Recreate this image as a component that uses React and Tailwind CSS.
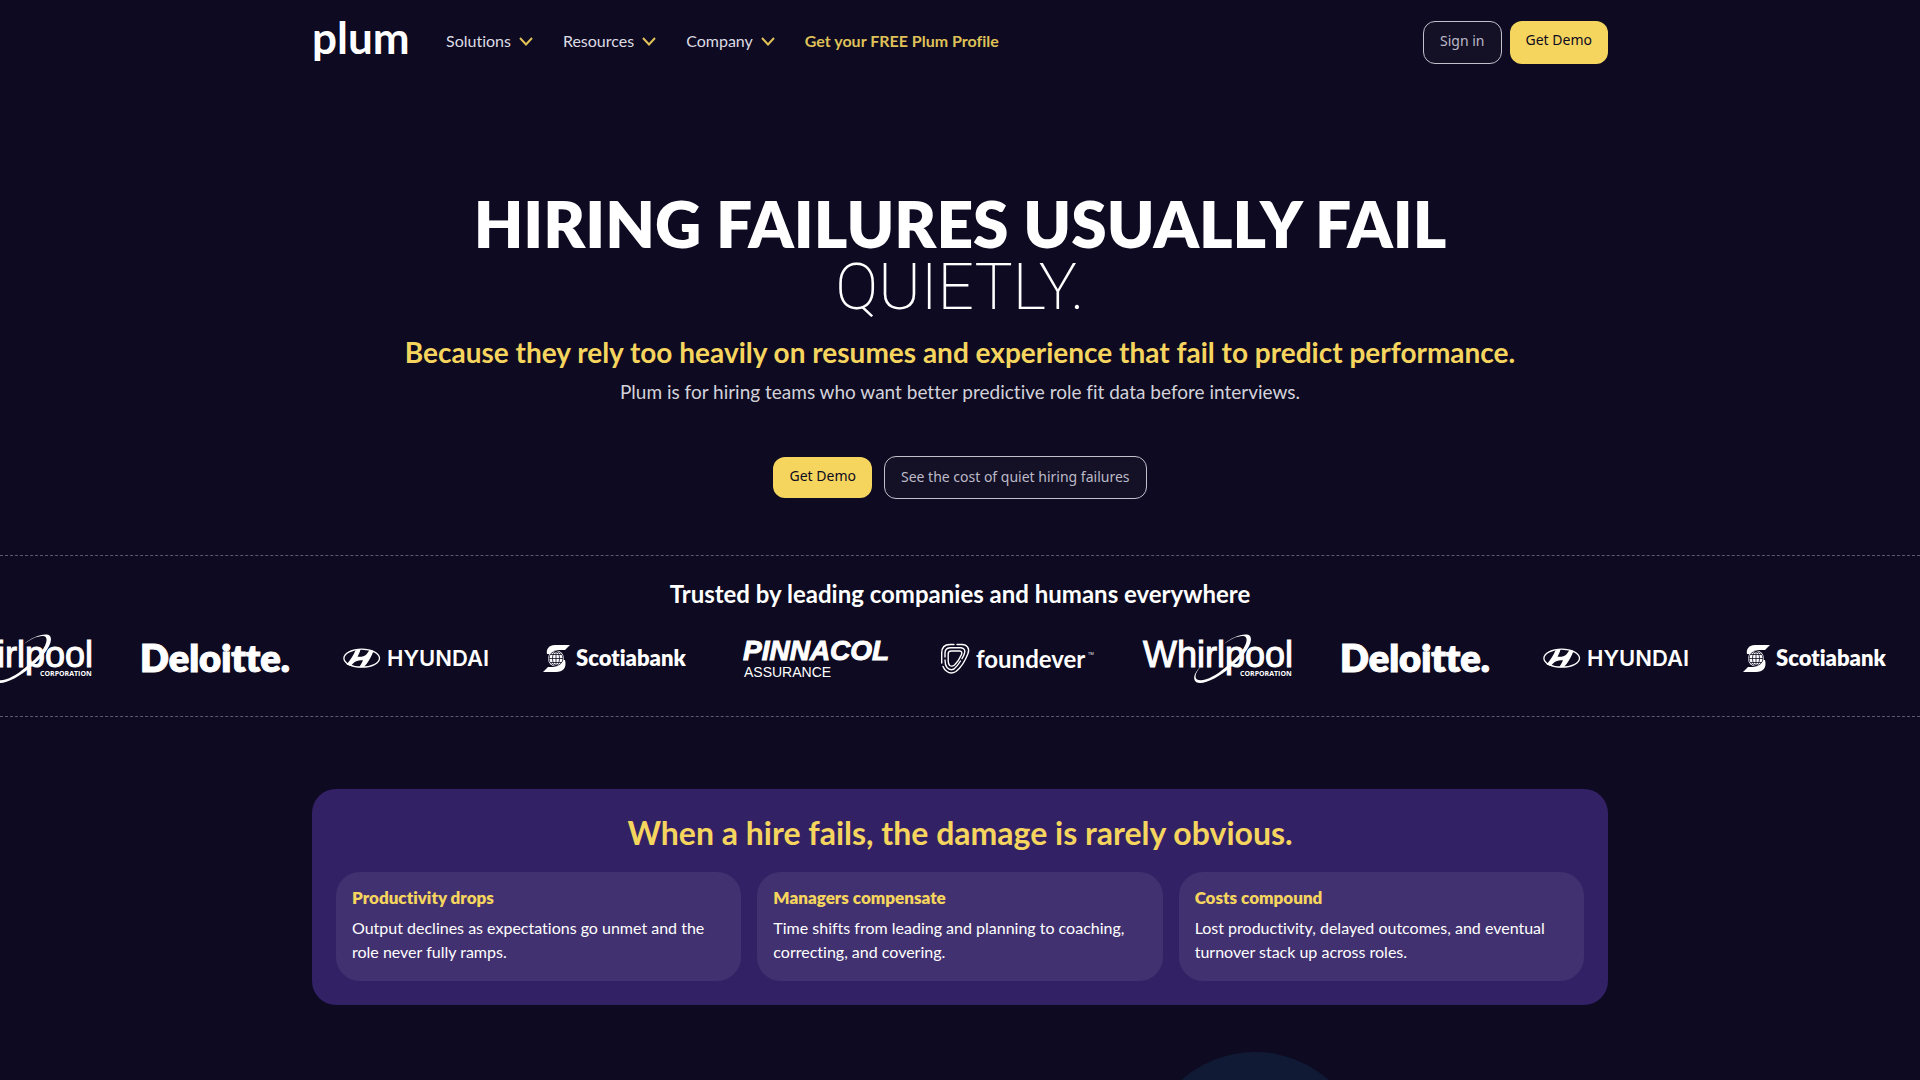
const navItems = ["Solutions", "Resources", "Company"];

const damages = [
  {
    title: "Productivity drops",
    text: "Output declines as expectations go unmet and the role never fully ramps.",
  },
  {
    title: "Managers compensate",
    text: "Time shifts from leading and planning to coaching, correcting, and covering.",
  },
  {
    title: "Costs compound",
    text: "Lost productivity, delayed outcomes, and eventual turnover stack up across roles.",
  },
];

function LogoFrame({ label, children }) {
  return (
    <svg viewBox="0 0 150 60" role="img" aria-label={label} className="h-[60px] w-[150px] shrink-0 overflow-visible fill-white">
      {children}
    </svg>
  );
}

function Whirlpool() {
  return (
    <LogoFrame label="Whirlpool Corporation">
      <text x="1" y="39" className="stroke-white stroke-1 font-['Liberation_Sans'] text-[36px]">Whirlpool</text>
      <text x="98" y="48" className="font-['Open_Sans'] text-[7px] font-bold">CORPORATION</text>
      <path
        fillRule="evenodd"
        d="M82 16C90 9 104 4 108 8c4 6-5 19-19 31C76 50 60 58 54 54c-4-4-1-10 5-16-5 6-7 11-4 13.500 6 3 18-3 29-12.500C98 28 107 15 104 9.500 101 5.500 90 10 82 16z"
      />
    </LogoFrame>
  );
}

function Deloitte() {
  return (
    <LogoFrame label="Deloitte">
      <text x="-2" y="44" className="stroke-white stroke-1 font-['Lato'] text-[38px] font-extrabold">Deloitte.</text>
    </LogoFrame>
  );
}

function Hyundai() {
  return (
    <LogoFrame label="Hyundai">
      <ellipse cx="19.700" cy="30.200" rx="17.800" ry="9" className="fill-none stroke-white stroke-[1.300]" />
      <path d="M13.500 22.300l5-1c-.6 3-1.800 5.400-3 7.500 4 .3 7-.5 9-2.500 1.300-1.300 2.200-3 3-4.500l4 1.300c-2 5.500-5.500 11.500-9.500 16l-5 .2c1.800-2.300 3-4.500 4-7-4-.3-7 .4-9.500 2.700-1 1-1.800 2-2.800 3l-4.200-1.500c4-4.500 7-9.200 9-14.200z" />
      <text x="45" y="38" className="font-['Inter'] text-[22px] font-semibold">HYUNDAI</text>
    </LogoFrame>
  );
}

function Scotiabank() {
  return (
    <LogoFrame label="Scotiabank">
      <path d="M28 17H13C7 17 4 21 5 26h4c1-3 4-4 8-4h6z" />
      <path d="M1 44h13c7 0 11-4 9-12h-4c0 4-3 7-7 7H6z" />
      <circle cx="14" cy="30.500" r="8" />
      <g className="fill-none stroke-[#0d0a21] stroke-[0.8]">
        <circle cx="14" cy="30.500" r="7" />
        <ellipse cx="14" cy="30.500" rx="3.500" ry="7" />
        <path d="M14 23.500v14M7 30.500h14M8.500 26.500h11M8.500 34.500h11" />
      </g>
      <text x="34" y="38" className="font-['Lato'] text-[22px] font-extrabold">Scotiabank</text>
    </LogoFrame>
  );
}

function Pinnacol() {
  return (
    <LogoFrame label="Pinnacol Assurance">
      <text x="1" y="32" className="stroke-white stroke-1 font-['Liberation_Sans'] text-[28px] font-bold italic">PINNACOL</text>
      <text x="2" y="49" className="font-['Liberation_Sans'] text-[14px]">ASSURANCE</text>
    </LogoFrame>
  );
}

function Foundever() {
  return (
    <LogoFrame label="foundever">
      <g className="fill-none stroke-white stroke-[1.400]" strokeLinecap="round" strokeLinejoin="round">
        <path d="M12 16.500H8C2 16.500-.3 20-.3 25v10M15 16.500h5c5 0 8 4 6 9-3 8-7 14-12 18q-5 3-9 0-3-2-4-5" />
        <path d="M3 29v-4q0-5 5-5.300h11q5 1 3.500 5.500-1 3-2.500 5.500M18.500 33q-3 5-6.500 8-4 2-7-1.500Q3 37 3 32" />
        <path d="M6.200 33v-7q0-3 3-3h8.500q3 .5 1.800 3.500-2.500 6-7 10.500-2.500 2-4.800.5-1.500-1.500-1.500-4.500z" />
      </g>
      <text x="34" y="40" className="font-['Lato'] text-[24px] font-bold">foundever</text>
      <text x="146" y="27" className="font-['Open_Sans'] text-[4px]">TM</text>
    </LogoFrame>
  );
}

function Caret() {
  return (
    <svg viewBox="0 0 14 9" aria-hidden="true" className="h-[9px] w-[14px] fill-none stroke-[#dfc158] stroke-2">
      <path d="M1 1l6 6.500L13 1" />
    </svg>
  );
}

const logos = [Whirlpool, Deloitte, Hyundai, Scotiabank, Pinnacol, Foundever];
const marquee = [...logos, ...logos.slice(0, 4)];

const filled = "rounded-xl bg-[#f5d55e] px-4 pb-1 font-['Noto_Sans'] text-sm text-[#0d0a21]";
const outlined = "rounded-xl border border-[#c3c1cc] bg-white/3 px-4 pb-0.5 font-['Noto_Sans'] text-sm text-[#bcbac6]";

export default function App() {
  return (
    <div className="flex h-screen flex-col overflow-hidden bg-[#0d0a21] font-['Lato','Noto_Sans',sans-serif] text-white [font-variant-ligatures:none]">
      <header className="mx-auto flex h-[84px] w-full max-w-[1296px] shrink-0 items-center">
        <a href="#home" aria-label="Plum home" className="w-[94px] pb-2.5 text-[44px] leading-[42px] font-bold">
          plum
        </a>
        <nav className="ml-10 flex items-center gap-[30px] pb-0.5 text-base">
          {navItems.map((item) => (
            <button key={item} type="button" className="flex items-center gap-2 text-[#dddce4]">
              {item}
              <Caret />
            </button>
          ))}
          <a href="#profile" className="font-bold text-[#dfc158]">Get your FREE Plum Profile</a>
        </nav>
        <div className="ml-auto flex gap-2">
          <button type="button" className={`h-[43px] ${outlined}`}>Sign in</button>
          <button type="button" className={`h-[43px] ${filled}`}>Get Demo</button>
        </div>
      </header>

      <main className="flex flex-1 flex-col">
        <section className="flex flex-col items-center px-6 pt-[108px] pb-14 text-center">
          <h1 className="text-[64px] leading-16 font-extrabold">
            HIRING FAILURES USUALLY FAIL
            <span className="block font-['Roboto'] font-extralight">QUIETLY.</span>
          </h1>
          <p className="mt-3 text-[28px] leading-10 font-bold text-[#f5d55e]">
            Because they rely too heavily on resumes and experience that fail to predict performance.
          </p>
          <p className="mt-1 text-[19px] leading-8 text-[#d3d2da]">
            Plum is for hiring teams who want better predictive role fit data before interviews.
          </p>
          <div className="mt-12 flex items-center gap-3">
            <button type="button" className={`h-[41px] ${filled}`}>Get Demo</button>
            <button type="button" className={`h-[43px] ${outlined}`}>See the cost of quiet hiring failures</button>
          </div>
        </section>

        <section className="overflow-hidden border-y border-dashed border-[#5b596b] pt-5 pb-7">
          <h2 className="text-center text-[24px] leading-9 font-bold">
            Trusted by leading companies and humans everywhere
          </h2>
          <div className="mt-4 -ml-[58px] flex gap-[50px]">
            {marquee.map((Logo, i) => (
              <Logo key={i} />
            ))}
          </div>
        </section>

        <section className="mx-auto mt-18 w-full max-w-[1296px] rounded-3xl bg-[#332166] p-6">
          <h2 className="text-center text-[32px] leading-10 font-bold text-[#f5d55e]">
            When a hire fails, the damage is rarely obvious.
          </h2>
          <div className="mt-[19px] grid grid-cols-3 gap-4">
            {damages.map((d) => (
              <article key={d.title} className="rounded-3xl bg-[#423170] px-4 pt-3 pb-[17px]">
                <h3 className="mb-1 text-[17px] leading-7 font-extrabold text-[#f5d55e]">{d.title}</h3>
                <p className="text-base leading-6">{d.text}</p>
              </article>
            ))}
          </div>
        </section>

        <section className="mx-auto mt-[47px] h-0 w-full max-w-[1296px] flex-1 overflow-hidden">
          <div className="ml-[832px] size-[222px] rounded-full bg-[#111a35]" />
        </section>
      </main>
    </div>
  );
}
